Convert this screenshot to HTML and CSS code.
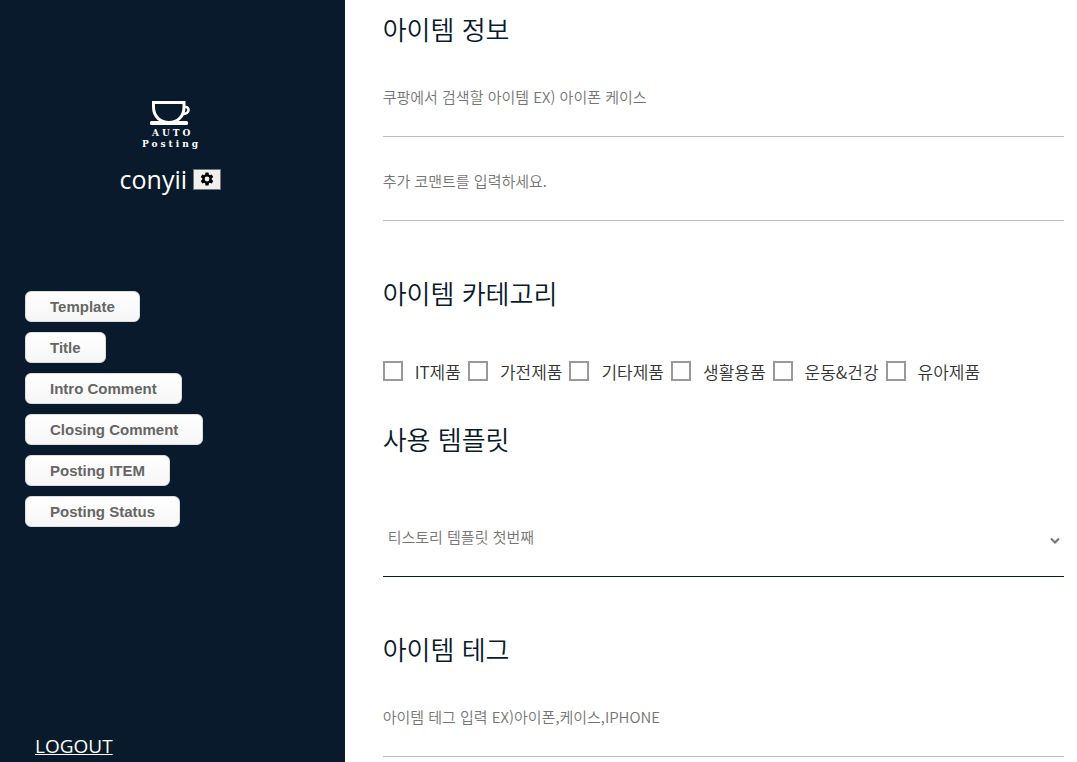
FILE: index.html
```html
<!DOCTYPE html>
<html lang="ko">
<head>
<meta charset="utf-8">
<meta name="viewport" content="width=device-width, initial-scale=1">
<title>AUTO Posting</title>
<link rel="stylesheet" href="styles.css">
</head>
<body>
<div class="layout">
  <aside class="sidebar">
    <header class="profile">
      <svg class="logo" viewBox="0 0 60 52" width="60" height="52" role="img" aria-label="AUTO Posting">
        <path d="M13.500 3.500H44V8C44 17.500 37.500 23.500 29 23.500S13.500 17.500 13.500 8Z" fill="none" stroke="#fff" stroke-width="3"/>
        <path d="M44 8H46Q48.500 8.500 48.500 11T45.500 14.500L42 15.500" fill="none" stroke="#fff" stroke-width="2.500"/>
        <rect x="10" y="22" width="38" height="4" rx="1.500" fill="#fff"/>
        <text class="logo-text" x="12" y="37">AUTO</text>
        <text class="logo-text" x="2" y="48">Posting</text>
      </svg>
      <div class="user">
        <span class="user-name">conyii</span>
        <button class="settings" type="button" aria-label="Settings">
          <svg viewBox="0 0 24 24" width="16" height="16"><path fill="#000" fill-rule="evenodd" d="M19.140 12.940a7.500 7.500 0 0 0 0-1.880l2.030-1.580a.5.5 0 0 0 .12-.61l-1.920-3.320a.5.5 0 0 0-.59-.22l-2.390.96a7 7 0 0 0-1.620-.94l-.36-2.540a.5.5 0 0 0-.48-.41h-3.840a.5.5 0 0 0-.47.410l-.36 2.540a7.400 7.400 0 0 0-1.620.94l-2.390-.96a.5.5 0 0 0-.59.220L2.740 8.870a.5.5 0 0 0 .12.610l2.030 1.580a7.500 7.500 0 0 0 0 1.880l-2.030 1.580a.5.5 0 0 0-.12.610l1.920 3.320c.12.220.37.290.59.220l2.390-.96c.5.380 1.030.7 1.620.94l.36 2.540c.05.240.24.410.48.410h3.840c.24 0 .44-.17.470-.41l.36-2.540a7.400 7.400 0 0 0 1.620-.94l2.390.96c.22.080.47 0 .59-.22l1.920-3.320a.5.5 0 0 0-.12-.61ZM12 15.600a3.600 3.600 0 1 1 0-7.200 3.600 3.600 0 0 1 0 7.200Z"/></svg>
        </button>
      </div>
    </header>
    <nav class="menu">
      <button class="menu-button" type="button">Template</button>
      <button class="menu-button" type="button">Title</button>
      <button class="menu-button" type="button">Intro Comment</button>
      <button class="menu-button" type="button">Closing Comment</button>
      <button class="menu-button" type="button">Posting ITEM</button>
      <button class="menu-button" type="button">Posting Status</button>
    </nav>
    <a class="logout" href="#">LOGOUT</a>
  </aside>
  <main class="content">
    <section class="section">
      <h2 class="heading">아이템 정보</h2>
      <div class="fields">
        <input class="field" type="text" aria-label="아이템" placeholder="쿠팡에서 검색할 아이템 EX) 아이폰 케이스">
        <input class="field" type="text" aria-label="추가 코맨트" placeholder="추가 코맨트를 입력하세요.">
      </div>
    </section>
    <section class="section section-categories">
      <h2 class="heading">아이템 카테고리</h2>
      <div class="categories">
        <label class="category"><input class="check" type="checkbox">IT제품</label>
        <label class="category"><input class="check" type="checkbox">가전제품</label>
        <label class="category"><input class="check" type="checkbox">기타제품</label>
        <label class="category"><input class="check" type="checkbox">생활용품</label>
        <label class="category"><input class="check" type="checkbox">운동&amp;건강</label>
        <label class="category"><input class="check" type="checkbox">유아제품</label>
      </div>
    </section>
    <section class="section section-template">
      <h2 class="heading">사용 템플릿</h2>
      <div class="select-wrap">
        <select class="field select" aria-label="사용 템플릿"><option>티스토리 템플릿 첫번째</option></select>
        <svg class="chevron" viewBox="0 0 10 8" width="10" height="8"><path d="M1 1.500L5 5.500L9 1.500" fill="none" stroke="#757575" stroke-width="2"/></svg>
      </div>
    </section>
    <section class="section">
      <h2 class="heading">아이템 테그</h2>
      <div class="fields">
        <input class="field" type="text" aria-label="아이템 테그" placeholder="아이템 테그 입력 EX)아이폰,케이스,IPHONE">
      </div>
    </section>
  </main>
</div>
</body>
</html>
```
FILE: styles.css
```css
* { box-sizing: border-box; }

body {
  margin: 0;
  background: #fff;
  color: #333;
  font-family: "Noto Sans CJK KR", sans-serif;
}

.layout {
  display: flex;
  min-height: 100vh;
}

.sidebar {
  display: flex;
  flex-direction: column;
  flex: none;
  width: 32%;
  padding: 99px 25px 0;
  background: #081a2b;
  color: #fff;
}

.profile {
  display: flex;
  flex-direction: column;
  align-items: center;
  gap: 10px;
  padding-right: 4px;
}

.logo { display: block; }

.logo-text {
  fill: #fff;
  font: bold 9px "DejaVu Serif", serif;
  letter-spacing: 3px;
}

.user {
  display: flex;
  align-items: center;
  gap: 6px;
}

.user-name {
  font: 25px/36px "Open Sans", sans-serif;
}

.settings {
  display: flex;
  align-items: center;
  justify-content: center;
  width: 28px;
  height: 21px;
  padding: 0;
  border: 1px solid #767676;
  background: #efefef;
}

.menu {
  display: flex;
  flex-direction: column;
  align-items: flex-start;
  gap: 10px;
  margin-top: 94px;
}

.menu-button {
  height: 31px;
  padding: 0 24px;
  border: 1px solid #dcdcdc;
  border-radius: 6px;
  background: linear-gradient(#fff, #f6f6f6);
  color: #666;
  font: bold 15px "Liberation Sans", sans-serif;
}

.logout {
  align-self: flex-start;
  margin: auto 10px 0;
  color: #fff;
  font: 19px/32px "Open Sans", sans-serif;
}

.content {
  flex: 1;
  min-width: 0;
  padding: 11px 13px 0 38px;
}

.section { margin-bottom: 54px; }
.section:last-child { margin-bottom: 0; }

.heading {
  margin: 0 0 11px;
  color: #081a2b;
  font-size: 26px;
  font-weight: 350;
  line-height: 36px;
}

.fields {
  display: flex;
  flex-direction: column;
  gap: 5px;
}

.field {
  display: block;
  width: 100%;
  height: 79px;
  padding: 0 0 2px;
  border: 0;
  border-bottom: 1px solid #bdbdbd;
  border-radius: 0;
  outline: 0;
  background: transparent;
  color: #757575;
  font-family: inherit;
  font-size: 15px;
  font-weight: 350;
}

.field::placeholder { color: #757575; }

.section-categories { margin-bottom: 29px; }
.section-categories .heading { margin-bottom: 39px; }

.categories {
  display: flex;
  flex-wrap: wrap;
  gap: 7px;
}

.category {
  display: flex;
  align-items: center;
  gap: 12px;
  height: 42px;
  font-size: 17px;
  font-weight: 350;
}

.check {
  appearance: none;
  width: 20px;
  height: 20px;
  margin: 0;
  border: 2px solid #999;
  background: #fff;
}

.check:checked { background: #081a2b; }

.section-template .heading { margin-bottom: 41px; }

.select-wrap { position: relative; }

.select {
  appearance: none;
  padding-left: 5px;
  border-bottom-color: #081a2b;
}

.chevron {
  position: absolute;
  top: 39px;
  right: 4px;
  pointer-events: none;
}
```
